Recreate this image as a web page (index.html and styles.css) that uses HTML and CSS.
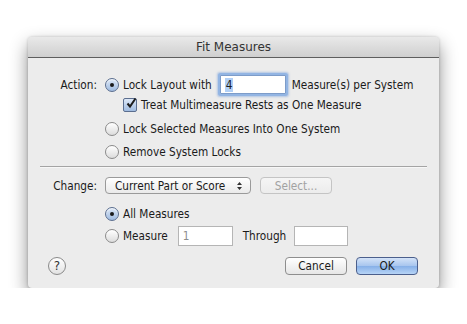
FILE: index.html
```html
<!DOCTYPE html>
<html lang="en">
<head>
    <meta charset="UTF-8">
    <title>Fit Measures</title>
    <link rel="stylesheet" href="styles.css">
</head>
<body>
    <div class="window">
        <div class="titlebar">Fit Measures</div>

        <div class="content">
            <div class="row row-lock">
                <span class="label">Action:</span>
                <span class="radio checked"></span>
                <span class="text">Lock Layout with</span>
                <span class="field focused"><span class="sel">4</span></span>
                <span class="text after-field">Measure(s) per System</span>
            </div>
            <div class="row row-check">
                <span class="checkbox"><svg width="12" height="12" viewBox="0 0 12 12"><path d="M2.5 6.5 L5 9.5 L10.5 1.5" fill="none" stroke="#1c1c1c" stroke-width="2"/></svg></span>
                <span class="text">Treat Multimeasure Rests as One Measure</span>
            </div>
            <div class="row row-radio2">
                <span class="label"></span>
                <span class="radio"></span>
                <span class="text">Lock Selected Measures Into One System</span>
            </div>
            <div class="row row-radio3">
                <span class="label"></span>
                <span class="radio"></span>
                <span class="text">Remove System Locks</span>
            </div>

            <div class="separator"></div>

            <div class="row row-change">
                <span class="label">Change:</span>
                <span class="popup"><span class="popup-text">Current Part or Score</span>
                    <svg class="arrows" width="7" height="10" viewBox="0 0 7 10"><path d="M3.5 1 L6 4 H1 Z M3.5 9 L6 6 H1 Z" fill="#333"/></svg>
                </span>
                <span class="button disabled">Select...</span>
            </div>
            <div class="row row-all">
                <span class="label"></span>
                <span class="radio checked"></span>
                <span class="text">All Measures</span>
            </div>
            <div class="row row-measure">
                <span class="label"></span>
                <span class="radio"></span>
                <span class="text">Measure</span>
                <span class="field small muted">1</span>
                <span class="text through">Through</span>
                <span class="field small"></span>
            </div>

            <div class="footer">
                <span class="help">?</span>
                <span class="spacer"></span>
                <span class="button">Cancel</span>
                <span class="button default">OK</span>
            </div>
        </div>
    </div>
</body>
</html>
```

FILE: styles.css
```css
body {
    margin: 0;
    background-color: #ffffff;
    font-family: "DejaVu Sans Condensed", "DejaVu Sans", sans-serif;
    font-size: 11.7px;
    color: #1a1a1a;
}

.window {
    width: 411px;
    height: 251px;
    margin: 37px 0 0 28px;
    background-color: #ececec;
    border-radius: 4px;
    box-shadow: 0 0 3px rgba(0, 0, 0, 0.2), 0 8px 18px rgba(0, 0, 0, 0.45);
    overflow: hidden;
}

.titlebar {
    height: 20px;
    line-height: 20px;
    text-align: center;
    font-family: "DejaVu Sans", sans-serif;
    font-size: 12px;
    color: #333333;
    background: linear-gradient(#e9e9e9, #cfcfcf);
    border-bottom: 1px solid #5e5e5e;
}

.content {
    padding: 16px 0 0 0;
}

.row {
    display: flex;
    align-items: center;
}

.label {
    width: 69px;
    text-align: right;
    padding-right: 8px;
    flex: none;
}

.text {
    margin-left: 4px;
    white-space: nowrap;
}

.row-lock { height: 21px; }
.row-check { height: 16px; margin-top: 2px; padding-left: 95px; }
.row-radio2 { height: 16px; margin-top: 8px; }
.row-radio3 { height: 16px; margin-top: 7px; }
.row-change { height: 17px; margin-top: 9px; }
.row-all { height: 16px; margin-top: 12px; }
.row-measure { height: 20px; margin-top: 4px; }

.radio {
    width: 12px;
    height: 12px;
    border-radius: 50%;
    border: 1px solid #8a8a8a;
    background: linear-gradient(#ffffff, #dcdcdc);
    box-shadow: inset 0 1px 1px rgba(255, 255, 255, 0.8);
    flex: none;
    display: flex;
    align-items: center;
    justify-content: center;
}

.radio.checked {
    border-color: #5b6e8f;
    background: linear-gradient(#dde8f7, #9fbbe0);
}

.radio.checked::after {
    content: "";
    width: 4px;
    height: 4px;
    border-radius: 50%;
    background-color: #1a1a1a;
}

.checkbox {
    width: 12px;
    height: 12px;
    border: 1px solid #5b6e8f;
    border-radius: 2px;
    background: linear-gradient(#dde8f7, #9fbbe0);
    flex: none;
    position: relative;
}

.checkbox svg {
    position: absolute;
    left: 1px;
    top: -2px;
}

.field {
    height: 19px;
    background-color: #ffffff;
    border: 1px solid #9a9a9a;
    border-top-color: #7a7a7a;
    box-sizing: border-box;
    display: flex;
    align-items: center;
    padding-left: 4px;
}

.field.focused {
    width: 66px;
    height: 19px;
    margin-left: 8px;
    border: 1px solid #7d9cc9;
    border-radius: 1px;
    box-shadow: 0 0 0 2px #93b5e3, 0 0 2px 3px rgba(120, 160, 220, 0.5);
}

.field.focused .sel {
    background-color: #b2d0f6;
    padding: 0 1px;
}

.after-field { margin-left: 6px; }

.field.small {
    width: 55px;
    height: 20px;
    margin-left: 10px;
    border-color: #b5b5b5;
}

.field.muted { color: #8d8d8d; }

.through { margin-left: 10px; }

.row-measure .field:last-child { margin-left: 8px; width: 54px; }

.separator {
    height: 1px;
    margin: 6px 12px 0 12px;
    background-color: #a4a4a4;
    border-bottom: 1px solid #f7f7f7;
}

.popup {
    width: 146px;
    height: 17px;
    box-sizing: border-box;
    border: 1px solid #9a9a9a;
    border-radius: 4px;
    background: linear-gradient(#ffffff, #eaeaea);
    display: flex;
    align-items: center;
    padding: 0 7px 0 9px;
    justify-content: space-between;
    white-space: nowrap;
}

.button {
    height: 18px;
    box-sizing: border-box;
    border: 1px solid #8e8e8e;
    border-radius: 4px;
    background: linear-gradient(#ffffff, #e6e6e6);
    display: flex;
    align-items: center;
    justify-content: center;
    width: 62px;
}

.button.disabled {
    width: 72px;
    height: 17px;
    margin-left: 9px;
    color: #a2a2a2;
    border-color: #c4c4c4;
    background: linear-gradient(#f5f5f5, #ececec);
}

.button.default {
    margin-left: 9px;
    border-color: #4b5f8c;
    background: linear-gradient(#d4e3f8 0%, #a7c5ee 50%, #86b0e8 51%, #b7d4f6 100%);
}

.footer {
    display: flex;
    align-items: center;
    margin-top: 11px;
    padding: 0 21px 0 20px;
    height: 18px;
}

.spacer { flex: 1; }

.help {
    width: 18px;
    height: 18px;
    box-sizing: border-box;
    border-radius: 50%;
    border: 1px solid #8a8a8a;
    background: linear-gradient(#ffffff, #e2e2e2);
    display: flex;
    align-items: center;
    justify-content: center;
    font-family: "DejaVu Sans", sans-serif;
    font-size: 12px;
    color: #333333;
}
```
